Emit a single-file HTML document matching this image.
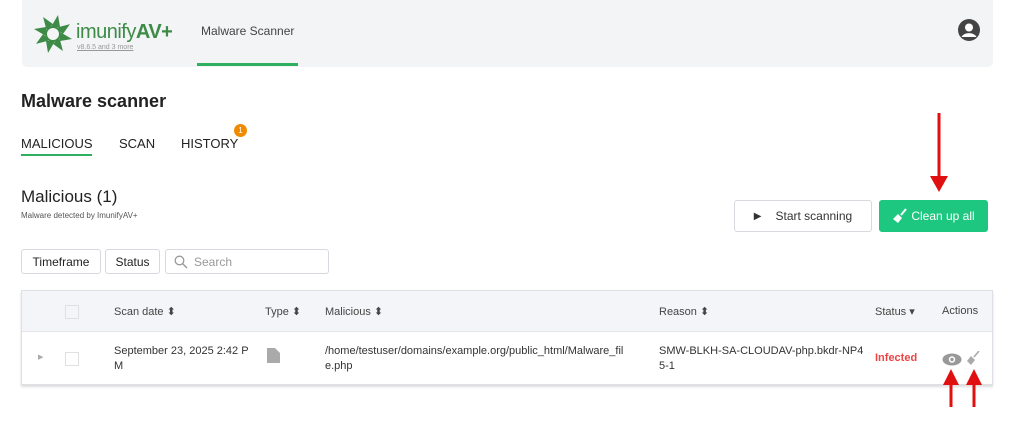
<!DOCTYPE html><html><head><style>
body{margin:0;width:1024px;height:430px;background:#fff;font-family:"Liberation Sans",sans-serif;position:relative;overflow:hidden;color:#222}
.a{position:absolute}
.btn{position:absolute;border:1px solid #d6d9de;border-radius:3px;background:#fff;font-size:12px;display:flex;align-items:center;justify-content:center;box-sizing:border-box}
.th{position:absolute;top:305px;font-size:11px;color:#444}
.td{position:absolute;font-size:11px;color:#333;line-height:15px}
</style></head><body>
<div class="a" style="left:22px;top:0;width:971px;height:67px;background:#f3f4f6;border-radius:0 0 5px 5px"></div>
<svg class="a" style="left:33px;top:14px" width="40" height="40" viewBox="0 0 40 40"><g fill="#3d8b47" transform="translate(20,20)"><g id="p"><polygon points="-2,-7 5,-19 7,-7"/></g><use href="#p" transform="rotate(45)"/><use href="#p" transform="rotate(90)"/><use href="#p" transform="rotate(135)"/><use href="#p" transform="rotate(180)"/><use href="#p" transform="rotate(225)"/><use href="#p" transform="rotate(270)"/><use href="#p" transform="rotate(315)"/><circle r="7" fill="none" stroke="#3d8b47" stroke-width="2"/></g></svg>
<div class="a" style="left:76px;top:21px;font-size:20px;color:#3d8b47;letter-spacing:-0.5px">imunify<b>AV+</b></div>
<div class="a" style="left:77px;top:44px;font-size:7px;color:#999;text-decoration:underline">v8.6.5 and 3 more</div>
<div class="a" style="left:201px;top:24px;font-size:12px;color:#444">Malware Scanner</div>
<div class="a" style="left:197px;top:63px;width:101px;height:3px;background:#2eb060"></div>
<svg class="a" style="left:958px;top:19px" width="22" height="22" viewBox="0 0 22 22"><circle cx="11" cy="11" r="11" fill="#444"/><circle cx="11" cy="8.5" r="4" fill="#fff"/><path d="M3.5 18a8 6 0 0 1 15 0" fill="#fff"/></svg>
<div class="a" style="left:21px;top:91px;font-size:18px;font-weight:bold">Malware scanner</div>
<div class="a" style="left:21px;top:136px;font-size:13px">MALICIOUS</div>
<div class="a" style="left:21px;top:154px;width:71px;height:2px;background:#2eb060"></div>
<div class="a" style="left:119px;top:136px;font-size:13px">SCAN</div>
<div class="a" style="left:181px;top:136px;font-size:13px">HISTORY</div>
<div class="a" style="left:234px;top:124px;width:13px;height:13px;border-radius:50%;background:#f08a00;color:#fff;font-size:8px;text-align:center;line-height:13px">1</div>
<div class="a" style="left:21px;top:187px;font-size:17px">Malicious (1)</div>
<div class="a" style="left:21px;top:211px;font-size:8px;color:#555">Malware detected by ImunifyAV+</div>
<div class="btn" style="left:734px;top:200px;width:138px;height:32px;color:#333"><span style="font-size:10px;margin-right:14px">&#9654;</span>Start scanning</div>
<div class="btn" style="left:879px;top:200px;width:109px;height:32px;background:#1ec77f;border-color:#1ec77f;color:#fff"><svg width="16" height="16" viewBox="0 0 16 16" style="margin-right:3px"><path d="M14 1 9 7" stroke="#fff" stroke-width="2"/><path d="M6 6 10 10 6 15 1 11Z" fill="#fff"/></svg>Clean up all</div>
<div class="btn" style="left:21px;top:249px;width:80px;height:25px">Timeframe</div>
<div class="btn" style="left:105px;top:249px;width:55px;height:25px">Status</div>
<div class="btn" style="left:165px;top:249px;width:164px;height:25px;justify-content:flex-start;padding-left:8px;color:#999"><svg width="14" height="14" viewBox="0 0 14 14" style="margin-right:6px"><circle cx="5.5" cy="5.5" r="4.3" stroke="#999" stroke-width="1.3" fill="none"/><path d="M8.7 8.7 13 13" stroke="#999" stroke-width="1.4"/></svg>Search</div>
<div class="a" style="left:21px;top:290px;width:972px;height:95px;border:1px solid #dde0e5;box-shadow:0 2px 2px #ddd;box-sizing:border-box"></div>
<div class="a" style="left:22px;top:291px;width:970px;height:40px;background:#f3f5f8;border-bottom:1px solid #e3e5e8"></div>
<div class="a" style="left:65px;top:305px;width:12px;height:12px;border:1px solid #e0e0e0"></div>
<div class="th" style="left:114px">Scan date ⬍</div>
<div class="th" style="left:265px">Type ⬍</div>
<div class="th" style="left:325px">Malicious ⬍</div>
<div class="th" style="left:659px">Reason ⬍</div>
<div class="th" style="left:875px">Status ▾</div>
<div class="th" style="left:942px">Actions</div>
<div class="td" style="left:38px;top:350px;font-size:7px;color:#aaa">▶</div>
<div class="a" style="left:65px;top:352px;width:12px;height:12px;border:1px solid #e0e0e0"></div>
<div class="td" style="left:114px;top:344px">September 23, 2025 2:42 P<br>M</div>
<svg class="a" style="left:267px;top:348px" width="13" height="15"><path d="M0 0H8L13 5V15H0Z" fill="#aaa"/></svg>
<div class="td" style="left:325px;top:344px">/home/testuser/domains/example.org/public_html/Malware_fil<br>e.php</div>
<div class="td" style="left:659px;top:344px">SMW-BLKH-SA-CLOUDAV-php.bkdr-NP4<br>5-1</div>
<div class="td" style="left:875px;top:351px;color:#f04444;font-weight:bold">Infected</div>
<svg class="a" style="left:942px;top:353px" width="20" height="13"><ellipse cx="10" cy="6.5" rx="9.5" ry="6" fill="#999"/><circle cx="10" cy="6.5" r="3.2" fill="#fff"/><circle cx="10" cy="6.5" r="1.7" fill="#999"/></svg>
<svg class="a" style="left:966px;top:351px" width="14" height="14"><path d="M13 0 8 6" stroke="#aaa" stroke-width="1.6"/><path d="M5 5 9 9 5 14 1 10Z" fill="#aaa"/></svg>
<svg class="a" style="left:0;top:0" width="1024" height="430"><g fill="#e01010" stroke="#e01010" stroke-width="3"><line x1="939" y1="113" x2="939" y2="180"/><polygon points="930,176 948,176 939,192" stroke="none"/><line x1="951" y1="382" x2="951" y2="407"/><polygon points="943,385 959,385 951,369" stroke="none"/><line x1="974" y1="382" x2="974" y2="407"/><polygon points="966,385 982,385 974,369" stroke="none"/></g></svg>
</body></html>
